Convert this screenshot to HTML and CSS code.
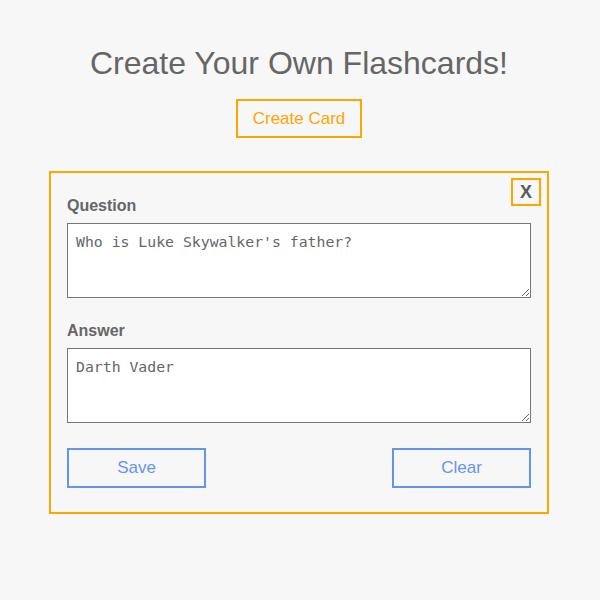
FILE: index.html
```html
<!DOCTYPE html>
<html>
<head>
<meta charset="utf-8">
<link rel="stylesheet" href="styles.css">
</head>
<body>
<div class="page">
  <h1 class="title">Create Your Own Flashcards!</h1>
  <button class="create-btn">Create Card</button>
  <div class="card">
    <button class="close-btn">X</button>
    <label class="field-label">Question</label>
    <textarea class="field-input">Who is Luke Skywalker's father?</textarea>
    <label class="field-label">Answer</label>
    <textarea class="field-input">Darth Vader</textarea>
    <div class="actions">
      <button class="action-btn">Save</button>
      <button class="action-btn">Clear</button>
    </div>
  </div>
</div>
</body>
</html>
```

FILE: styles.css
```css
html, body {
  margin: 0;
  padding: 0;
  background: #f7f7f7;
}
body {
  font-family: "Liberation Sans", Arial, sans-serif;
  color: #666;
}
.page {
  padding: 45px 2px 0 0;
  display: flex;
  flex-direction: column;
  align-items: center;
}
.title {
  margin: 0;
  font-size: 32px;
  font-weight: normal;
  line-height: 37px;
  color: #666;
}
.create-btn {
  margin-top: 17px;
  height: 39px;
  padding: 0 15px;
  border: 2px solid #ffa500;
  background: transparent;
  color: #ffa500;
  font-family: "Liberation Sans", Arial, sans-serif;
  font-size: 17px;
  cursor: pointer;
}
.card {
  position: relative;
  box-sizing: border-box;
  width: 500px;
  margin-top: 33px;
  padding: 0 16px 24px;
  border: 2px solid #ffa500;
}
.close-btn {
  position: absolute;
  top: 5px;
  right: 6px;
  box-sizing: border-box;
  width: 30px;
  height: 28px;
  padding: 0;
  border: 2px solid #ffa500;
  background: transparent;
  color: #5a5a5a;
  font-family: "Liberation Sans", Arial, sans-serif;
  font-size: 18px;
  font-weight: bold;
  line-height: 24px;
}
.field-label {
  display: block;
  margin: 24px 0 8px;
  font-size: 16px;
  font-weight: bold;
  line-height: 18px;
  color: #666;
}
.field-input {
  display: block;
  box-sizing: border-box;
  width: 100%;
  height: 75px;
  margin: 0;
  padding: 9px 8px 8px;
  border: 1px solid #767676;
  background: #fff;
  color: #666;
  font-family: "DejaVu Sans Mono", monospace;
  font-size: 14.8px;
}
.actions {
  display: flex;
  justify-content: space-between;
  margin-top: 25px;
}
.action-btn {
  box-sizing: border-box;
  width: 139px;
  height: 40px;
  border: 2px solid #6495ed;
  background: transparent;
  color: #6495ed;
  font-family: "Liberation Sans", Arial, sans-serif;
  font-size: 17px;
}
```
